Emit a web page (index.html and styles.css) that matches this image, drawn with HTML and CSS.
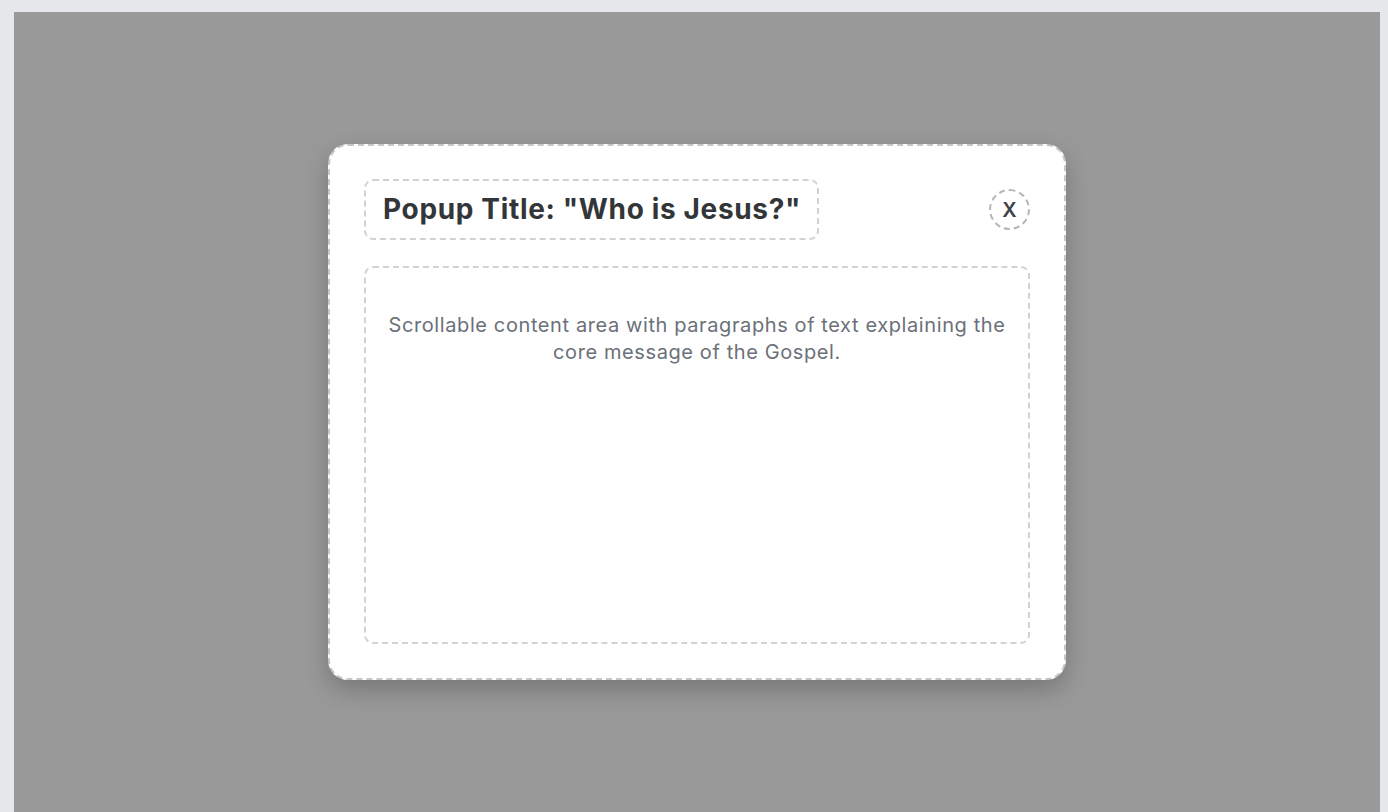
FILE: index.html
```html
<!DOCTYPE html>
<html lang="en">
<head>
<meta charset="utf-8">
<title>Popup</title>
<link rel="stylesheet" href="styles.css">
</head>
<body>
<div class="stage">
  <div class="overlay">
    <div class="modal">
      <div class="modal-header">
        <h2 class="modal-title">Popup Title: "Who is Jesus?"</h2>
        <button class="close-btn" type="button">X</button>
      </div>
      <div class="modal-body">
        <p>Scrollable content area with paragraphs of text explaining the core message of the Gospel.</p>
      </div>
    </div>
  </div>
</div>
</body>
</html>
```
FILE: styles.css
```css
* { box-sizing: border-box; }
html, body { margin: 0; padding: 0; }
body {
  background: #e5e7eb;
  font-family: Inter, "Noto Sans", sans-serif;
  overflow: hidden;
}
.stage {
  padding: 12px 8px 0 14px;
  height: 812px;
}
.overlay {
  background: #999999;
  height: 800px;
  display: flex;
  align-items: center;
  justify-content: center;
}
.modal {
  width: 738px;
  height: 536px;
  background: #ffffff;
  border: 2px dashed #c4c7cc;
  border-radius: 20px;
  padding: 33px 34px 34px 34px;
  box-shadow: 0 10px 25px rgba(0, 0, 0, 0.22);
  display: flex;
  flex-direction: column;
}
.modal-header {
  display: flex;
  align-items: center;
  justify-content: space-between;
  margin-bottom: 26px;
}
.modal-title {
  margin: 0;
  font-size: 28px;
  line-height: 37px;
  font-weight: 700;
  letter-spacing: 0.65px;
  color: #333639;
  border: 2px dashed #cfd1d4;
  border-radius: 9px;
  padding: 10px 16px 10px 17px;
}
.close-btn {
  width: 41px;
  height: 41px;
  border-radius: 50%;
  border: 2px dashed #b3b6bb;
  background: #ffffff;
  font-family: Inter, "Noto Sans", sans-serif;
  font-size: 20px;
  font-weight: 600;
  color: #3f4247;
  padding: 0;
  display: flex;
  align-items: center;
  justify-content: center;
}
.modal-body {
  flex: 1;
  border: 2px dashed #d0d2d5;
  border-radius: 9px;
  padding: 24px 20px;
  text-align: center;
}
.modal-body p {
  margin: 20px 0 0;
  font-size: 20px;
  line-height: 27px;
  letter-spacing: 0.6px;
  color: #6b7079;
}
```
